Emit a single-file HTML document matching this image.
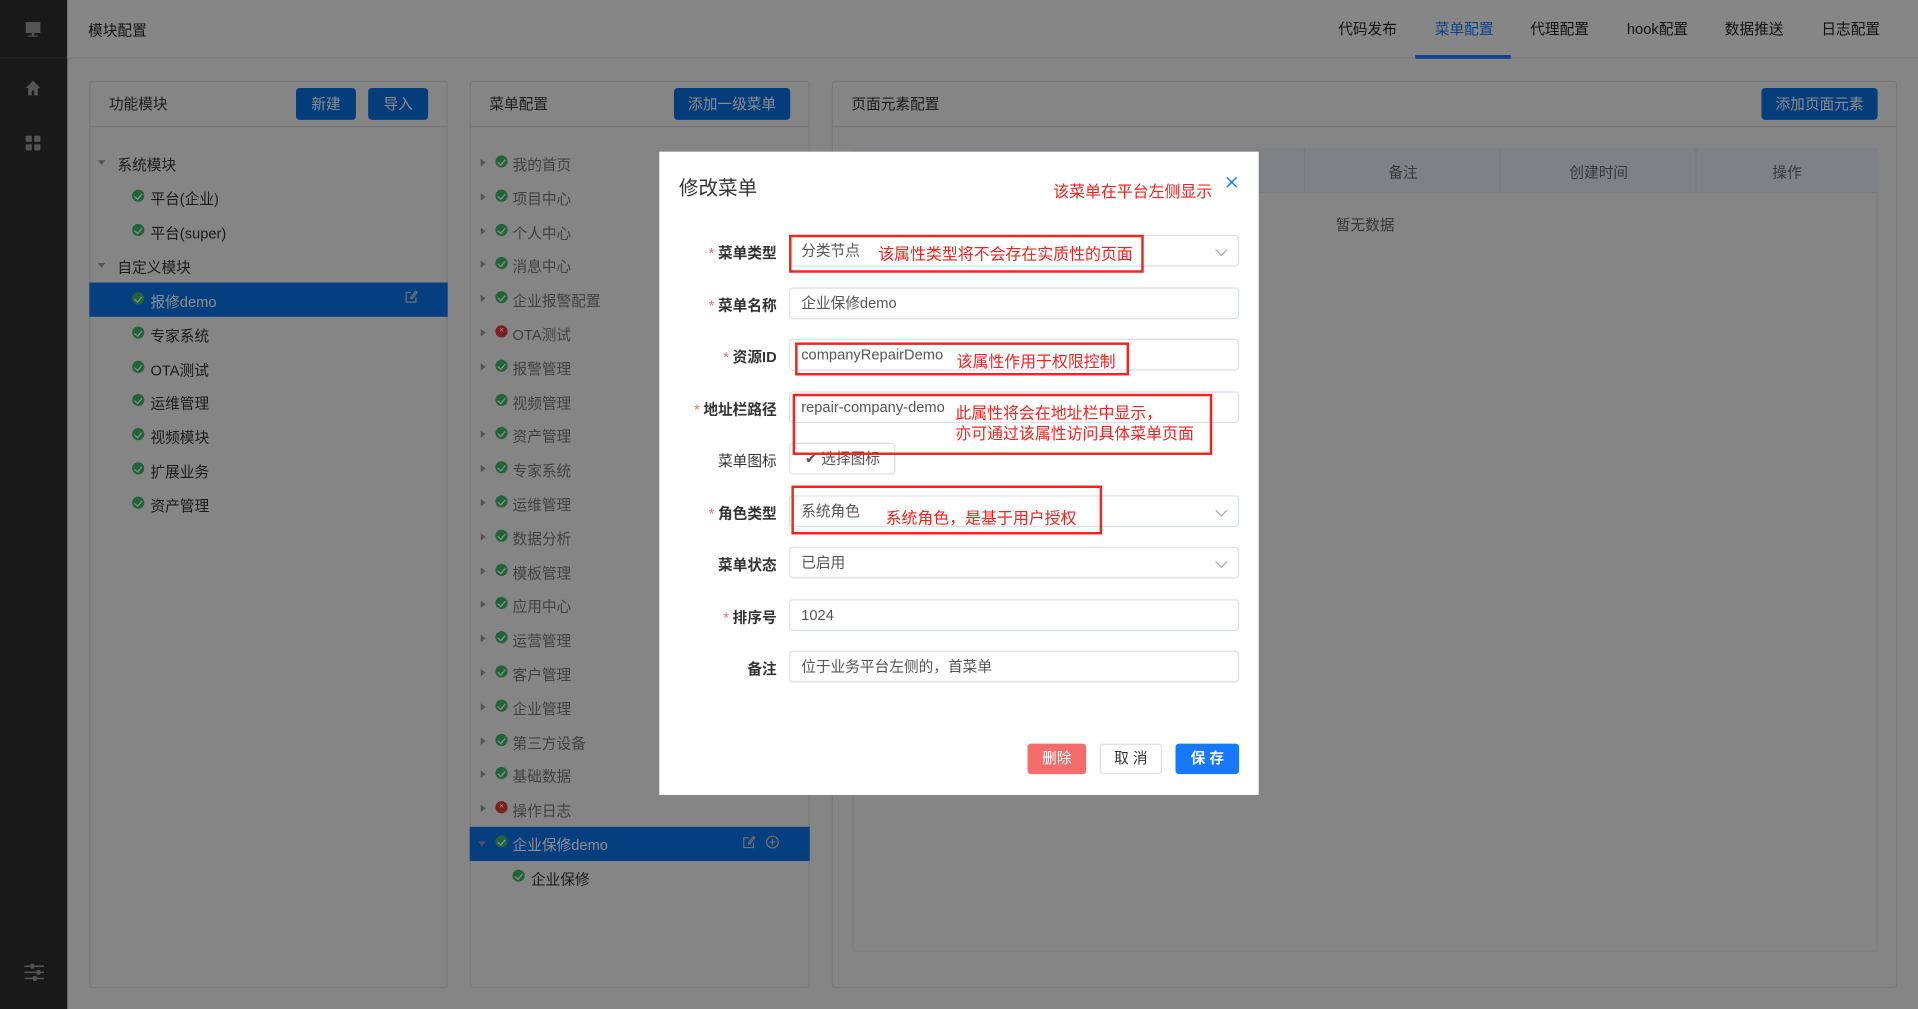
<!DOCTYPE html>
<html><head><meta charset="utf-8"><style>
*{margin:0;padding:0;box-sizing:border-box}
html,body{width:1918px;height:1009px;overflow:hidden;background:#f2f2f2}
#st{position:absolute;left:0;top:0;width:1568px;height:825px;transform:scale(1.22321,1.22303);transform-origin:0 0;font-family:"Liberation Sans","Noto Sans CJK SC",sans-serif;font-size:12px;color:#333;background:#f2f2f2}
.a{position:absolute;white-space:nowrap}
.side{left:0;top:0;width:55px;height:825px;background:#2f2f2f}
.hdr{left:55px;top:0;width:1513px;height:48px;background:#f4f4f4;border-bottom:1px solid #ddd}
.panel{background:#f2f2f2;border:1px solid #ddd;border-radius:3px}
.ph{border-bottom:1px solid #ddd}
.btn{background:#0a6fe0;color:#fff;border-radius:3px;text-align:center;line-height:26px;font-size:12px}
.ok{display:inline-block;width:10px;height:10px;border-radius:50%;background:#3fb768;position:absolute}
.ok:after{content:"";position:absolute;left:3px;top:2px;width:3px;height:5px;border:solid #fff;border-width:0 1.3px 1.3px 0;transform:rotate(40deg)}
.err{display:inline-block;width:10px;height:10px;border-radius:50%;background:#e03a3a;position:absolute;color:#fff;font-size:7px;line-height:10px;text-align:center}
.tri{position:absolute;width:0;height:0;border-left:4px solid #999;border-top:3px solid transparent;border-bottom:3px solid transparent}
.trd{position:absolute;width:0;height:0;border-top:4px solid #999;border-left:3px solid transparent;border-right:3px solid transparent}
#ov{position:absolute;left:0;top:0;width:1568px;height:825px;background:rgba(0,0,0,0.45)}
.m{left:539px;top:124px;width:490px;height:526px;background:#fff}
.lb{position:absolute;right:394px;width:90px;text-align:right;font-size:12px;color:#333;font-weight:bold}
.lb i{color:#f56c6c;font-style:normal;font-weight:normal;margin-right:3px}
.in{position:absolute;left:106px;width:368px;height:26px;border:1px solid #dcdfe6;border-radius:3px;padding-left:9px;line-height:24px;color:#555;font-size:12px}
.chev{position:absolute;right:10px;top:8px;width:7px;height:7px;border:solid #aaa;border-width:0 1px 1px 0;transform:rotate(45deg)}
.rb{position:absolute;border:2px solid #f5221d}
.rt{position:absolute;color:#f5221d;font-size:13px;white-space:nowrap}
</style></head><body><div id="st">
<div class="a side"></div>
<div class="a" style="left:0;top:47px;width:55px;height:1px;background:#444"></div>
<svg class="a" style="left:20px;top:17px" width="14" height="14" viewBox="0 0 14 14"><rect x="1" y="1" width="12" height="9" fill="#999"/><rect x="6" y="10" width="2" height="2" fill="#999"/><rect x="3" y="12" width="8" height="1" fill="#999"/></svg>
<svg class="a" style="left:20px;top:65px" width="14" height="14" viewBox="0 0 14 14"><path d="M7 1L1 7h2v6h3V9h2v4h3V7h2z" fill="#999"/></svg>
<svg class="a" style="left:20px;top:110px" width="14" height="14" viewBox="0 0 14 14"><rect x="1" y="1" width="5" height="5" fill="#999"/><rect x="8" y="1" width="5" height="5" fill="#999"/><rect x="1" y="8" width="5" height="5" fill="#999"/><rect x="8" y="8" width="5" height="5" fill="#999"/></svg>
<svg class="a" style="left:19px;top:787px" width="18" height="16" viewBox="0 0 18 16"><g stroke="#999" stroke-width="1.3"><line x1="1" y1="3" x2="17" y2="3"/><line x1="1" y1="8" x2="17" y2="8"/><line x1="1" y1="13" x2="17" y2="13"/></g><rect x="6" y="1" width="3" height="4" fill="#999"/><rect x="11" y="6" width="3" height="4" fill="#999"/><rect x="8" y="11" width="3" height="4" fill="#999"/></svg>
<div class="a hdr"></div>
<div class="a" style="left:72px;top:16px;font-size:12px;color:#222">模块配置</div>
<div class="a" style="left:1094px;top:15px;font-size:12px;color:#222">代码发布</div>
<div class="a" style="left:1173px;top:15px;font-size:12px;color:#1677ff">菜单配置</div>
<div class="a" style="left:1157px;top:45px;width:78px;height:3px;background:#1677ff"></div>
<div class="a" style="left:1251px;top:15px;font-size:12px;color:#222">代理配置</div>
<div class="a" style="left:1330px;top:15px;font-size:12px;color:#222">hook配置</div>
<div class="a" style="left:1410px;top:15px;font-size:12px;color:#222">数据推送</div>
<div class="a" style="left:1489px;top:15px;font-size:12px;color:#222">日志配置</div>

<div class="a panel" style="left:73px;top:66px;width:293px;height:742px"></div>
<div class="a ph" style="left:73px;top:66px;width:293px;height:38px"></div>
<div class="a" style="left:89px;top:76px">功能模块</div>
<div class="a btn" style="left:242px;top:72px;width:49px">新建</div>
<div class="a btn" style="left:301px;top:72px;width:49px">导入</div>
<div class="a" style="left:73px;top:231px;width:293px;height:28px;background:#0a74ea"></div>
<div class="trd" style="left:80px;top:131px"></div><div class="a" style="left:96px;top:126px">系统模块</div>
<span class="ok" style="left:108px;top:155px"></span><div class="a" style="left:123px;top:154px">平台(企业)</div>
<span class="ok" style="left:108px;top:183px"></span><div class="a" style="left:123px;top:182px">平台(super)</div>
<div class="trd" style="left:80px;top:215px"></div><div class="a" style="left:96px;top:210px">自定义模块</div>
<span class="ok" style="left:108px;top:239px"></span><div class="a" style="left:123px;top:238px;color:#fff">报修demo</div>
<svg class="a" style="left:331px;top:237px" width="11" height="11" viewBox="0 0 11 11"><path d="M9 6v4H1V2h4M5 6l4-5 1 1-4 5H5z" fill="none" stroke="#ccc" stroke-width="1"/></svg>
<span class="ok" style="left:108px;top:267px"></span><div class="a" style="left:123px;top:266px">专家系统</div>
<span class="ok" style="left:108px;top:295px"></span><div class="a" style="left:123px;top:294px">OTA测试</div>
<span class="ok" style="left:108px;top:322px"></span><div class="a" style="left:123px;top:321px">运维管理</div>
<span class="ok" style="left:108px;top:350px"></span><div class="a" style="left:123px;top:349px">视频模块</div>
<span class="ok" style="left:108px;top:378px"></span><div class="a" style="left:123px;top:377px">扩展业务</div>
<span class="ok" style="left:108px;top:406px"></span><div class="a" style="left:123px;top:405px">资产管理</div>

<div class="a panel" style="left:384px;top:66px;width:278px;height:742px"></div>
<div class="a ph" style="left:384px;top:66px;width:278px;height:38px"></div>
<div class="a" style="left:400px;top:76px">菜单配置</div>
<div class="a btn" style="left:551px;top:72px;width:95px">添加一级菜单</div>
<div class="a" style="left:384px;top:676px;width:278px;height:28px;background:#0a74ea"></div>
<div id="t2"></div>

<div class="a panel" style="left:680px;top:66px;width:871px;height:742px"></div>
<div class="a ph" style="left:680px;top:66px;width:871px;height:38px"></div>
<div class="a" style="left:696px;top:76px">页面元素配置</div>
<div class="a btn" style="left:1440px;top:72px;width:95px">添加页面元素</div>
<div class="a" style="left:697px;top:121px;width:838px;height:657px;border:1px solid #e4e4e4"></div>
<div class="a" style="left:697px;top:121px;width:838px;height:37px;background:#eaecf0;border-bottom:1px solid #ddd"></div>
<div class="a" style="left:1066px;top:121px;width:1px;height:37px;background:#ddd"></div>
<div class="a" style="left:1226px;top:121px;width:1px;height:37px;background:#ddd"></div>
<div class="a" style="left:1386px;top:121px;width:1px;height:37px;background:#ddd"></div>
<div class="a" style="left:1135px;top:132px;color:#666">备注</div>
<div class="a" style="left:1283px;top:132px;color:#666">创建时间</div>
<div class="a" style="left:1449px;top:132px;color:#666">操作</div>
<div class="a" style="left:1092px;top:175px;color:#666">暂无数据</div>

<div id="ov"></div>
<div class="a m">
 <div class="a" style="left:16px;top:16px;font-size:16px;color:#333">修改菜单</div>
 <div class="rt" style="left:322px;top:22px">该菜单在平台左侧显示</div>
 <svg class="a" style="left:463px;top:20px" width="10" height="10" viewBox="0 0 10 10"><path d="M1 1L9 9M9 1L1 9" stroke="#1677ff" stroke-width="1.2"/></svg>

 <div class="lb" style="top:74px"><i>*</i>菜单类型</div><div class="in" style="top:68px">分类节点<span class="chev"></span></div>
 <div class="lb" style="top:117px"><i>*</i>菜单名称</div><div class="in" style="top:111px">企业保修demo</div>
 <div class="lb" style="top:159px"><i>*</i>资源ID</div><div class="in" style="top:153px">companyRepairDemo</div>
 <div class="lb" style="top:202px"><i>*</i>地址栏路径</div><div class="in" style="top:196px">repair-company-demo</div>
 <div class="lb" style="top:244px;font-weight:normal">菜单图标</div>
 <div class="a" style="left:106px;top:238px;width:87px;height:26px;border:1px solid #dcdfe6;border-radius:3px;line-height:24px;padding-left:12px;color:#555">✔ 选择图标</div>
 <div class="lb" style="top:287px"><i>*</i>角色类型</div><div class="in" style="top:281px">系统角色<span class="chev"></span></div>
 <div class="lb" style="top:329px">菜单状态</div><div class="in" style="top:323px">已启用<span class="chev"></span></div>
 <div class="lb" style="top:372px"><i>*</i>排序号</div><div class="in" style="top:366px">1024</div>
 <div class="lb" style="top:414px">备注</div><div class="in" style="top:408px">位于业务平台左侧的，首菜单</div>

 <div class="rb" style="left:106px;top:68px;width:290px;height:31px"></div>
 <div class="rt" style="left:179px;top:73px">该属性类型将不会存在实质性的页面</div>
 <div class="rb" style="left:111px;top:156px;width:273px;height:27px"></div>
 <div class="rt" style="left:243px;top:161px">该属性作用于权限控制</div>
 <div class="rb" style="left:109px;top:198px;width:343px;height:50px"></div>
 <div class="rt" style="left:242px;top:205px;line-height:17px">此属性将会在地址栏中显示，<br>亦可通过该属性访问具体菜单页面</div>
 <div class="rb" style="left:108px;top:273px;width:254px;height:40px"></div>
 <div class="rt" style="left:185px;top:289px">系统角色，是基于用户授权</div>

 <div class="a" style="left:301px;top:484px;width:48px;height:25px;background:#f56c6c;color:#fff;border-radius:3px;text-align:center;line-height:25px">删除</div>
 <div class="a" style="left:360px;top:484px;width:51px;height:25px;border:1px solid #dcdfe6;border-radius:3px;text-align:center;line-height:23px;color:#333">取 消</div>
 <div class="a" style="left:422px;top:484px;width:52px;height:25px;background:#1677ff;color:#fff;border-radius:3px;text-align:center;line-height:25px;font-weight:bold">保 存</div>
</div>
<script>
var items=[["我的首页",1],["项目中心",1],["个人中心",1],["消息中心",1],["企业报警配置",1],["OTA测试",0],["报警管理",1],["视频管理",2],["资产管理",1],["专家系统",1],["运维管理",1],["数据分析",1],["模板管理",1],["应用中心",1],["运营管理",1],["客户管理",1],["企业管理",1],["第三方设备",1],["基础数据",1],["操作日志",0]];
var h="";
items.forEach(function(it,i){var y=126+i*27.8;
 if(it[1]!==2)h+='<div class="tri" style="left:393px;top:'+(y+4)+'px"></div>';
 h+=(it[1]?'<span class="ok" style="left:405px;top:'+(y+1)+'px"></span>':'<span class="err" style="left:405px;top:'+(y+1)+'px">×</span>');
 h+='<div class="a" style="left:419px;top:'+y+'px;color:#777">'+it[0]+'</div>';});
h+='<div class="trd" style="left:391px;top:688px"></div><span class="ok" style="left:405px;top:683px"></span><div class="a" style="left:419px;top:682px;color:#fff">企业保修demo</div>';
h+='<svg class="a" style="left:607px;top:683px" width="11" height="11" viewBox="0 0 11 11"><path d="M9 6v4H1V2h4M5 6l4-5 1 1-4 5H5z" fill="none" stroke="#ccc"/></svg><svg class="a" style="left:626px;top:683px" width="11" height="11" viewBox="0 0 11 11"><circle cx="5.5" cy="5.5" r="4.8" fill="none" stroke="#ccc"/><path d="M5.5 3v5M3 5.5h5" stroke="#ccc"/></svg>';
h+='<span class="ok" style="left:419px;top:711px"></span><div class="a" style="left:434px;top:710px">企业保修</div>';
document.getElementById("t2").outerHTML=h;
</script>
</div></body></html>
